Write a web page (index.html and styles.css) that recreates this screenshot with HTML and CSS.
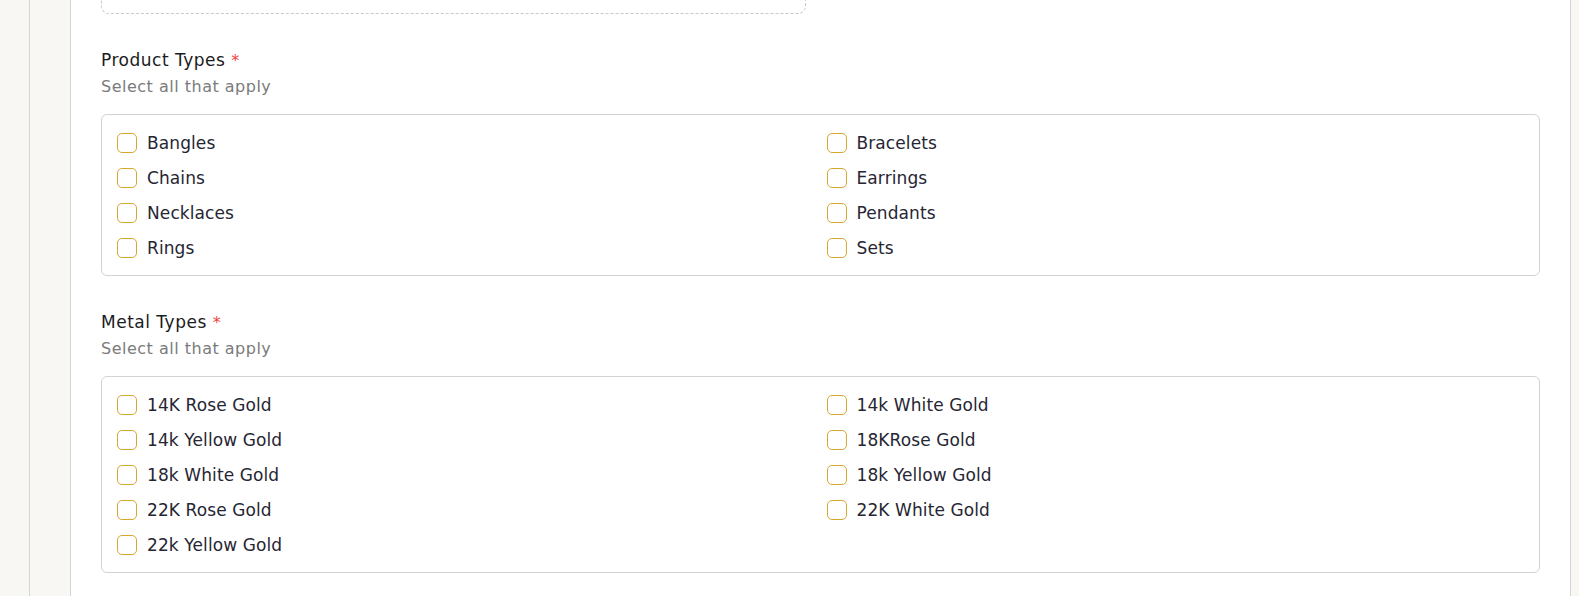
FILE: index.html
```html
<!DOCTYPE html>
<html lang="en">
<head>
<meta charset="utf-8">
<title>Product and Metal Types</title>
<link rel="stylesheet" href="styles.css">
</head>
<body>
<div class="rail"></div>
<div class="main">
  <div class="card">
    <div class="dropzone"></div>

    <section class="field">
      <div class="label">Product Types <span class="req">*</span></div>
      <div class="hint">Select all that apply</div>
      <div class="options">
        <label class="opt"><span class="box"></span><span>Bangles</span></label>
        <label class="opt"><span class="box"></span><span>Bracelets</span></label>
        <label class="opt"><span class="box"></span><span>Chains</span></label>
        <label class="opt"><span class="box"></span><span>Earrings</span></label>
        <label class="opt"><span class="box"></span><span>Necklaces</span></label>
        <label class="opt"><span class="box"></span><span>Pendants</span></label>
        <label class="opt"><span class="box"></span><span>Rings</span></label>
        <label class="opt"><span class="box"></span><span>Sets</span></label>
      </div>
    </section>

    <section class="field">
      <div class="label">Metal Types <span class="req">*</span></div>
      <div class="hint">Select all that apply</div>
      <div class="options">
        <label class="opt"><span class="box"></span><span>14K Rose Gold</span></label>
        <label class="opt"><span class="box"></span><span>14k White Gold</span></label>
        <label class="opt"><span class="box"></span><span>14k Yellow Gold</span></label>
        <label class="opt"><span class="box"></span><span>18KRose Gold</span></label>
        <label class="opt"><span class="box"></span><span>18k White Gold</span></label>
        <label class="opt"><span class="box"></span><span>18k Yellow Gold</span></label>
        <label class="opt"><span class="box"></span><span>22K Rose Gold</span></label>
        <label class="opt"><span class="box"></span><span>22K White Gold</span></label>
        <label class="opt"><span class="box"></span><span>22k Yellow Gold</span></label>
      </div>
    </section>
  </div>
</div>
</body>
</html>
```

FILE: styles.css
```css
html, body {
  margin: 0;
  height: 100%;
}
body {
  background: #f8f7f4;
  display: flex;
  font-family: "DejaVu Sans", "Noto Sans", sans-serif;
  font-size: 16px;
  color: #262633;
  overflow: hidden;
}
.rail {
  width: 29px;
  flex: none;
  border-right: 1px solid #d6d6d3;
}
.main {
  flex: 1;
  padding: 0 8px 0 40px;
  display: flex;
}
.card {
  flex: 1;
  background: #fff;
  border-left: 1px solid #d6d6d3;
  border-right: 1px solid #d6d6d3;
  padding: 0 30px;
}
.dropzone {
  width: 703px;
  height: 60px;
  margin-top: -48px;
  border: 1px dashed #c9c9c9;
  border-radius: 8px;
}
.field {
  margin-top: 34px;
}
.field + .field {
  margin-top: 34px;
}
.label {
  line-height: 24px;
  font-size: 17px;
  color: #1b1b22;
  letter-spacing: 0.5px;
}
.req {
  color: #ef4444;
  font-size: 16px;
  letter-spacing: 0;
}
.hint {
  margin-top: 2px;
  line-height: 24px;
  color: #7b7b7b;
  letter-spacing: 0.5px;
}
.options {
  margin-top: 15px;
  border: 1px solid #d2d2d2;
  border-radius: 6px;
  padding: 16px 15px 15px;
  display: grid;
  grid-template-columns: 1fr 1fr;
  column-gap: 12px;
  row-gap: 11px;
}
.opt {
  display: flex;
  align-items: center;
  gap: 10px;
  height: 24px;
  font-size: 17px;
  letter-spacing: 0.1px;
}
.box {
  width: 18px;
  height: 18px;
  flex: none;
  border: 1px solid #d6a92e;
  border-radius: 5px;
}
```
